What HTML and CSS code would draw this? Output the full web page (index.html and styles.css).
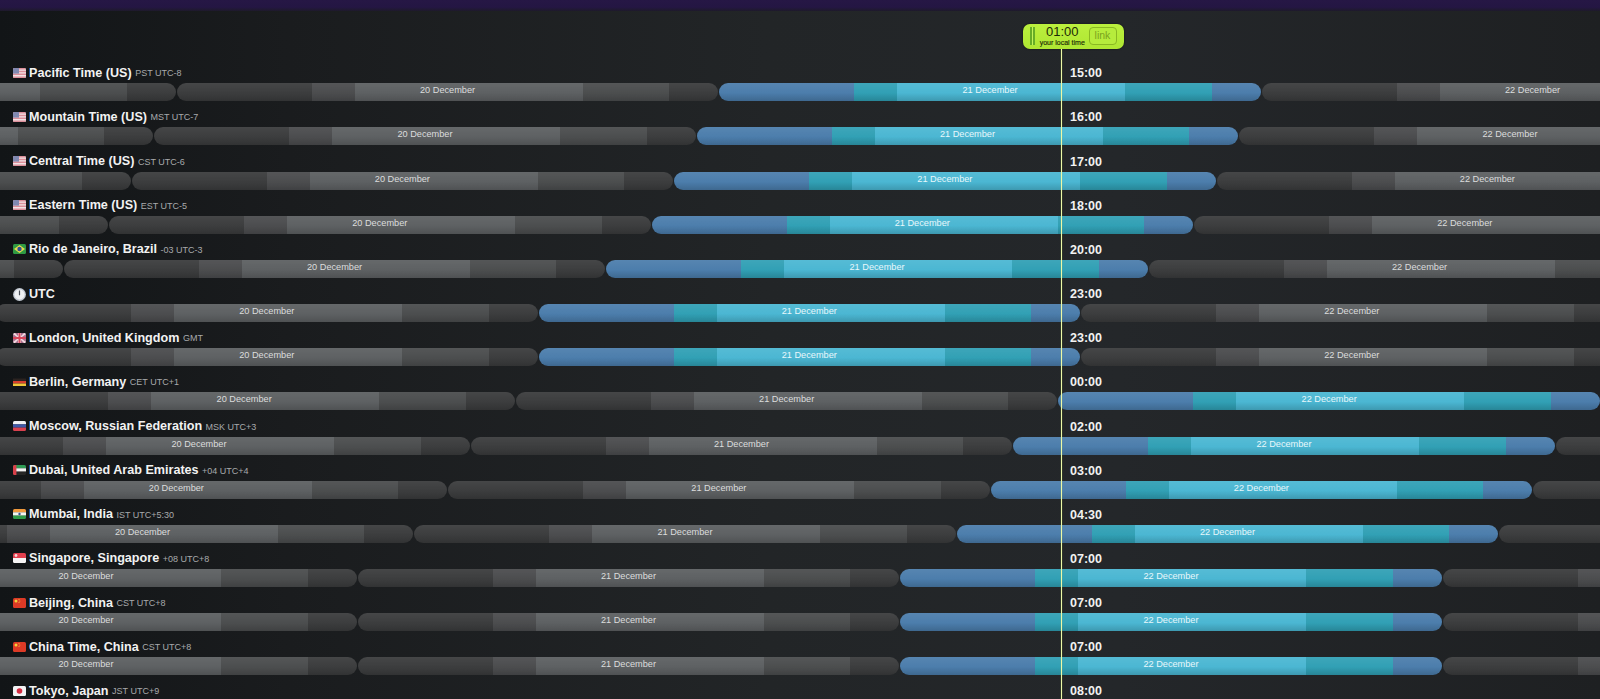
FILE: index.html
```html
<!DOCTYPE html>
<html lang="en">
<head>
<meta charset="utf-8">
<title>World time zones</title>
<link rel="stylesheet" href="styles.css">
</head>
<body>
<svg class="defs" width="0" height="0" aria-hidden="true">
  <symbol id="f-us" viewBox="0 0 13 10"><rect width="13" height="10" fill="#f3e3e6"/><path d="M0 0h13v1.4H0zM0 2.8h13v1.4H0zM0 5.6h13v1.4H0zM0 8.4h13V10H0z" fill="#dc8f9a"/><rect width="6" height="5.6" fill="#8088b0"/></symbol>
  <symbol id="f-br" viewBox="0 0 13 10"><rect width="13" height="10" fill="#2f9a44"/><path d="M6.5 1 12 5 6.5 9 1 5z" fill="#e8dc4a"/><circle cx="6.5" cy="5" r="2.2" fill="#2f4f96"/></symbol>
  <symbol id="f-utc" viewBox="0 0 13 13"><circle cx="6.5" cy="6.5" r="6.4" fill="#c4cad3"/><circle cx="6.5" cy="6.5" r="5" fill="#eef0f3"/><path d="M5.9 2.4h1.2v4.8H5.9z" fill="#4a4f58"/></symbol>
  <symbol id="f-gb" viewBox="0 0 13 10"><rect width="13" height="10" fill="#f4dbe0"/><path d="M0 1 4 4H0zM13 1 9 4h4zM0 9l4-3H0zM13 9 9 6h4zM2 0l3 3V0zM11 0 8 3V0zM2 10l3-3v3zM11 10 8 7v3z" fill="#a8708f"/><path d="M5.5 0h2v10h-2zM0 4h13v2H0z" fill="#d8475a"/></symbol>
  <symbol id="f-de" viewBox="0 0 13 10"><rect y="1.5" width="13" height="2.5" fill="#2b2320"/><rect y="4" width="13" height="2.5" fill="#d8402e"/><rect y="6.5" width="13" height="2.5" fill="#f0c83a"/></symbol>
  <symbol id="f-ru" viewBox="0 0 13 10"><rect width="13" height="3.4" fill="#f0f0f4"/><rect y="3.3" width="13" height="3.4" fill="#3f58a8"/><rect y="6.6" width="13" height="3.4" fill="#d8404e"/></symbol>
  <symbol id="f-ae" viewBox="0 0 13 10"><rect width="13" height="3.4" fill="#2f9a54"/><rect y="3.3" width="13" height="3.4" fill="#f2f2f2"/><rect y="6.6" width="13" height="3.4" fill="#262626"/><rect width="3.4" height="10" fill="#d8404a"/></symbol>
  <symbol id="f-in" viewBox="0 0 13 10"><rect width="13" height="3.4" fill="#f09a3e"/><rect y="3.3" width="13" height="3.4" fill="#f4f4f0"/><rect y="6.6" width="13" height="3.4" fill="#2f9a48"/><circle cx="6.5" cy="5" r="1.2" fill="#34508f"/></symbol>
  <symbol id="f-sg" viewBox="0 0 13 10"><rect width="13" height="5" fill="#e2404e"/><rect y="5" width="13" height="5" fill="#f6f4f4"/><circle cx="3" cy="2.5" r="1.4" fill="#f6d6d8"/></symbol>
  <symbol id="f-cn" viewBox="0 0 13 10"><rect width="13" height="10" fill="#dc3a26"/><circle cx="3" cy="3" r="1.5" fill="#f3d33a"/><circle cx="6" cy="1.6" r=".5" fill="#f3d33a"/><circle cx="6.8" cy="3" r=".5" fill="#f3d33a"/><circle cx="6" cy="4.6" r=".5" fill="#f3d33a"/></symbol>
  <symbol id="f-jp" viewBox="0 0 13 10"><rect width="13" height="10" fill="#f2f2f4"/><circle cx="6.5" cy="5" r="2.8" fill="#d42a40"/></symbol>
</svg>

<div class="topbar"></div>

<div class="now">
  <div class="pill">
    <span class="grip"></span>
    <div class="clock">
      <span class="clock-time">01:00</span>
      <span class="clock-note">your local time</span>
    </div>
    <a class="link">link</a>
  </div>
  <div class="now-line"></div>
</div>

<main class="list">
  <section class="zone tz-m8">
    <div class="head"><h2 class="name"><svg class="flag"><use href="#f-us"/></svg>Pacific Time (US) <small>PST UTC-8</small></h2><b class="time">15:00</b></div>
    <div class="strip"><div class="day"></div><div class="day">20 December</div><div class="day cur">21 December</div><div class="day">22 December</div><div class="day"></div></div>
  </section>
  <section class="zone tz-m7">
    <div class="head"><h2 class="name"><svg class="flag"><use href="#f-us"/></svg>Mountain Time (US) <small>MST UTC-7</small></h2><b class="time">16:00</b></div>
    <div class="strip"><div class="day"></div><div class="day">20 December</div><div class="day cur">21 December</div><div class="day">22 December</div><div class="day"></div></div>
  </section>
  <section class="zone tz-m6">
    <div class="head"><h2 class="name"><svg class="flag"><use href="#f-us"/></svg>Central Time (US) <small>CST UTC-6</small></h2><b class="time">17:00</b></div>
    <div class="strip"><div class="day"></div><div class="day">20 December</div><div class="day cur">21 December</div><div class="day">22 December</div><div class="day"></div></div>
  </section>
  <section class="zone tz-m5">
    <div class="head"><h2 class="name"><svg class="flag"><use href="#f-us"/></svg>Eastern Time (US) <small>EST UTC-5</small></h2><b class="time">18:00</b></div>
    <div class="strip"><div class="day"></div><div class="day">20 December</div><div class="day cur">21 December</div><div class="day">22 December</div><div class="day"></div></div>
  </section>
  <section class="zone tz-m3">
    <div class="head"><h2 class="name"><svg class="flag"><use href="#f-br"/></svg>Rio de Janeiro, Brazil <small>-03 UTC-3</small></h2><b class="time">20:00</b></div>
    <div class="strip"><div class="day"></div><div class="day">20 December</div><div class="day cur">21 December</div><div class="day">22 December</div><div class="day"></div></div>
  </section>
  <section class="zone tz-0">
    <div class="head"><h2 class="name"><svg class="flag flag-round"><use href="#f-utc"/></svg>UTC</h2><b class="time">23:00</b></div>
    <div class="strip"><div class="day"></div><div class="day">20 December</div><div class="day cur">21 December</div><div class="day">22 December</div><div class="day"></div></div>
  </section>
  <section class="zone tz-0">
    <div class="head"><h2 class="name"><svg class="flag"><use href="#f-gb"/></svg>London, United Kingdom <small>GMT</small></h2><b class="time">23:00</b></div>
    <div class="strip"><div class="day"></div><div class="day">20 December</div><div class="day cur">21 December</div><div class="day">22 December</div><div class="day"></div></div>
  </section>
  <section class="zone tz-p1">
    <div class="head"><h2 class="name"><svg class="flag"><use href="#f-de"/></svg>Berlin, Germany <small>CET UTC+1</small></h2><b class="time">00:00</b></div>
    <div class="strip"><div class="day"></div><div class="day">20 December</div><div class="day">21 December</div><div class="day cur">22 December</div><div class="day"></div></div>
  </section>
  <section class="zone tz-p3">
    <div class="head"><h2 class="name"><svg class="flag"><use href="#f-ru"/></svg>Moscow, Russian Federation <small>MSK UTC+3</small></h2><b class="time">02:00</b></div>
    <div class="strip"><div class="day"></div><div class="day">20 December</div><div class="day">21 December</div><div class="day cur">22 December</div><div class="day"></div></div>
  </section>
  <section class="zone tz-p4">
    <div class="head"><h2 class="name"><svg class="flag"><use href="#f-ae"/></svg>Dubai, United Arab Emirates <small>+04 UTC+4</small></h2><b class="time">03:00</b></div>
    <div class="strip"><div class="day"></div><div class="day">20 December</div><div class="day">21 December</div><div class="day cur">22 December</div><div class="day"></div></div>
  </section>
  <section class="zone tz-p55">
    <div class="head"><h2 class="name"><svg class="flag"><use href="#f-in"/></svg>Mumbai, India <small>IST UTC+5:30</small></h2><b class="time">04:30</b></div>
    <div class="strip"><div class="day"></div><div class="day">20 December</div><div class="day">21 December</div><div class="day cur">22 December</div><div class="day"></div></div>
  </section>
  <section class="zone tz-p8">
    <div class="head"><h2 class="name"><svg class="flag"><use href="#f-sg"/></svg>Singapore, Singapore <small>+08 UTC+8</small></h2><b class="time">07:00</b></div>
    <div class="strip"><div class="day"></div><div class="day">20 December</div><div class="day">21 December</div><div class="day cur">22 December</div><div class="day"></div></div>
  </section>
  <section class="zone tz-p8">
    <div class="head"><h2 class="name"><svg class="flag"><use href="#f-cn"/></svg>Beijing, China <small>CST UTC+8</small></h2><b class="time">07:00</b></div>
    <div class="strip"><div class="day"></div><div class="day">20 December</div><div class="day">21 December</div><div class="day cur">22 December</div><div class="day"></div></div>
  </section>
  <section class="zone tz-p8">
    <div class="head"><h2 class="name"><svg class="flag"><use href="#f-cn"/></svg>China Time, China <small>CST UTC+8</small></h2><b class="time">07:00</b></div>
    <div class="strip"><div class="day"></div><div class="day">20 December</div><div class="day">21 December</div><div class="day cur">22 December</div><div class="day"></div></div>
  </section>
  <section class="zone tz-p9">
    <div class="head"><h2 class="name"><svg class="flag"><use href="#f-jp"/></svg>Tokyo, Japan <small>JST UTC+9</small></h2><b class="time">08:00</b></div>
  </section>
</main>
</body>
</html>
```
FILE: styles.css
```css
html, body {
  margin: 0;
  height: 699px;
  overflow: hidden;
}

body {
  position: relative;
  font-family: "Liberation Sans", Arial, sans-serif;
  color: #f2f2f2;
  background:
    linear-gradient(90deg, #121517 0%, #1a1c1e 18%, #222527 48%, #24272a 70%, #1e2022 100%);
}

.defs {
  position: absolute;
}

.topbar {
  height: 11px;
  background: linear-gradient(180deg, #261745 0%, #241643 65%, #1e1a2a 100%);
}

/* current-time marker, lying over the rows */
.now {
  position: absolute;
  top: 0;
  left: 0;
  bottom: 0;
  width: 100%;
  pointer-events: none;
  z-index: 2;
}

.pill {
  position: absolute;
  top: 23.5px;
  left: 1022.5px;
  width: 101.5px;
  height: 25.5px;
  box-sizing: border-box;
  padding: 0 7.5px 0 7px;
  display: flex;
  align-items: center;
  border-radius: 7px;
  color: #1c2a06;
  background: linear-gradient(180deg, #bbf03e 0%, #aee632 100%);
  box-shadow: 0 0 2px rgba(0, 0, 0, .6);
}

.grip {
  flex: none;
  width: 1.5px;
  height: 18px;
  border-left: 2.5px solid #66ad26;
  border-right: 2.5px solid #66ad26;
  background: #c2f35a;
}

.clock {
  flex: 1;
  display: flex;
  flex-direction: column;
  align-items: center;
  margin-top: -1px;
  padding-left: 3px;
}

.clock-time {
  font-size: 13px;
  line-height: 13px;
}

.clock-note {
  font-size: 7px;
  line-height: 9px;
  font-weight: 400;
  -webkit-text-stroke: .15px #1c2a06;
}

.link {
  flex: none;
  box-sizing: border-box;
  width: 28px;
  height: 18px;
  margin-left: 2px;
  border: 1.5px solid #8ab822;
  border-radius: 4px;
  font-size: 10.5px;
  line-height: 14px;
  text-align: center;
  color: #7aa31c;
  background: #b6ec3c;
}

.now-line {
  position: absolute;
  top: 49px;
  left: 1061px;
  bottom: 0;
  width: 1px;
  background: #eef8a8;
  box-shadow: 0 0 1px rgba(170, 235, 60, .8);
}

/* rows */
.list {
  padding-top: 46.1px;
}

.zone {
  height: 44.17px;
  overflow: hidden;
}

.head {
  box-sizing: border-box;
  height: 26.17px;
  padding-bottom: 2px;
  display: grid;
  grid-template-columns: 1070px auto;
  align-items: end;
}

.name {
  margin: 0;
  padding-left: 12.5px;
  display: flex;
  align-items: center;
  font-size: 12.6px;
  line-height: 15px;
  font-weight: 700;
  white-space: pre;
}

.name small {
  font-size: 9px;
  font-weight: 400;
  color: #a8aaac;
  margin-top: 1px;
}

.flag {
  flex: none;
  width: 13px;
  height: 10px;
  margin-right: 3.5px;
  margin-top: -1px;
  border-radius: 1.5px;
}

.flag-round {
  height: 13px;
}

.time {
  font-size: 12.5px;
  line-height: 15px;
}

.strip {
  --tz: 0;
  display: flex;
  gap: 1px;
  margin-left: calc(-546.5px - 22.6px * var(--tz));
}

.tz-m8 .strip { --tz: -8; }
.tz-m7 .strip { --tz: -7; }
.tz-m6 .strip { --tz: -6; }
.tz-m5 .strip { --tz: -5; }
.tz-m3 .strip { --tz: -3; }
.tz-0 .strip { --tz: 0; }
.tz-p1 .strip { --tz: 1; }
.tz-p3 .strip { --tz: 3; }
.tz-p4 .strip { --tz: 4; }
.tz-p55 .strip { --tz: 5.5; }
.tz-p8 .strip { --tz: 8; }
.tz-p9 .strip { --tz: 9; }

.day {
  flex: none;
  width: 541.5px;
  height: 18px;
  border-radius: 9px;
  font-size: 9.2px;
  line-height: 15px;
  text-align: center;
  color: #dcdddd;
  background:
    linear-gradient(180deg, rgba(255, 255, 255, .06) 0%, rgba(255, 255, 255, .01) 55%, rgba(0, 0, 0, .14) 100%),
    linear-gradient(90deg,
      #3a3b3c 0 25%,
      #4a4b4d 25% 32.9%,
      #5c5f61 32.9% 75%,
      #4a4c4d 75% 91%,
      #3a3b3c 91% 100%);
}

.cur {
  color: #e8f7fb;
  background:
    linear-gradient(180deg, rgba(255, 255, 255, .07) 0%, rgba(255, 255, 255, .01) 55%, rgba(0, 0, 0, .16) 100%),
    linear-gradient(90deg,
      #4a7cab 0 25%,
      #2f9fb4 25% 32.9%,
      #49b6d2 32.9% 75%,
      #2f9fb4 75% 91%,
      #4a7cab 91% 100%);
}
```
